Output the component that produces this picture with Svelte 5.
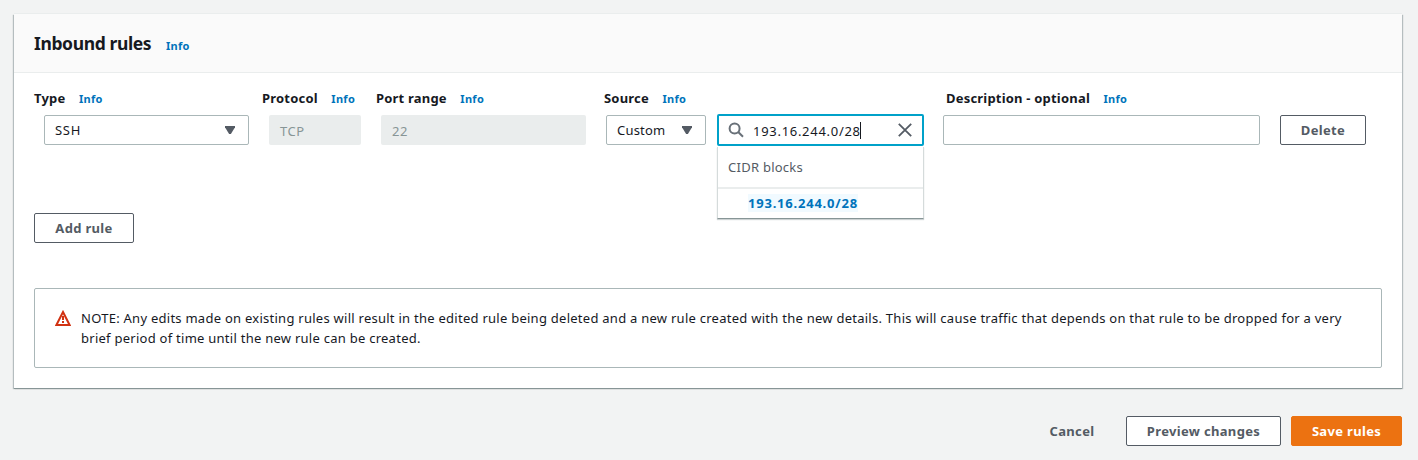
<script>
  const columns = ['Type', 'Protocol', 'Port range', 'Source', 'Description - optional'];
  let source = $state('193.16.244.0/28');
</script>

{#snippet caret()}
  <svg class="caret" width="10" height="8" viewBox="0 0 10 8"><path d="M0 0h10v1.2L5.9 8H4.1L0 1.2z" fill="#545b64" /></svg>
{/snippet}

<main>
  <section class="card">
    <header>
      <h2>Inbound rules</h2>
      <span class="info">Info</span>
    </header>
    <div class="body">
      <div class="labels">
        {#each columns as name}
          <div class="label"><span>{name}</span><span class="info">Info</span></div>
        {/each}
      </div>
      <div class="fields">
        <div class="field select type"><span>SSH</span>{@render caret()}</div>
        <div class="field disabled">TCP</div>
        <div class="field disabled">22</div>
        <div class="field select custom"><span>Custom</span>{@render caret()}</div>
        <div class="search">
          <svg width="16" height="16" viewBox="0 0 16 16" fill="none" stroke="#687078" stroke-width="2">
            <circle cx="6.6" cy="6.4" r="5" />
            <path d="M10.2 10 15 14.8" />
          </svg>
          <span class="value">{source}</span><i class="cursor"></i>
          <svg class="clear" width="14" height="14" viewBox="0 0 14 14" fill="none" stroke="#545b64" stroke-width="1.8">
            <path d="M.8 .8l12.4 12.4M13.2 .8L.8 13.2" />
          </svg>
          <div class="menu">
            <div class="group">CIDR blocks</div>
            <div class="option"><mark>{source}</mark></div>
          </div>
        </div>
        <div class="field description"></div>
        <button class="delete">Delete</button>
      </div>
      <button class="add">Add rule</button>
      <div class="note">
        <svg width="16" height="16" viewBox="0 0 16 16">
          <path d="M8 2 14.6 15H1.4z" fill="none" stroke="#d13212" stroke-width="2" />
          <path d="M8 6v4M8 11v2" stroke="#d13212" stroke-width="2" />
        </svg>
        <p>
          NOTE: Any edits made on existing rules will result in the edited rule being deleted and a new rule created with the new details. This will cause traffic that depends on that rule to be dropped for a very<br />brief period of time until the new rule can be created.
        </p>
      </div>
    </div>
  </section>
  <footer>
    <button class="cancel">Cancel</button>
    <button class="preview">Preview changes</button>
    <button class="save">Save rules</button>
  </footer>
</main>

<style>
  :global(body) { background: #f2f3f3; overflow: hidden; }
  main {
    box-sizing: border-box;
    height: 460px;
    padding: 14px 16px 0 14px;
    font: 13px/20px "Noto Sans", sans-serif;
    letter-spacing: 0.26px;
    color: #16191f;
    white-space: nowrap;
  }
  main * { box-sizing: border-box; }
  .card {
    height: 374px;
    background: #fff;
    box-shadow: 0 1px 0 #879596, 1px 1px 1px rgba(0, 28, 36, 0.25), -1px 1px 1px rgba(0, 28, 36, 0.25), 0 -1px 0 #eaeded;
  }
  header {
    height: 59px;
    padding: 17px 20px 0;
    display: flex;
    background: #fafafa;
    border-bottom: 1px solid #eaeded;
  }
  h2 { width: 132px; margin: 0; font-size: 17.5px; line-height: 24px; font-weight: 700; letter-spacing: -0.38px; }
  .info { color: #0073bb; font-size: 11px; font-weight: 700; letter-spacing: 0.3px; }
  header .info { padding-top: 5px; }
  .body { padding: 15px 20px 0; }
  .labels { display: grid; grid-template-columns: 228px 114px 228px 342px auto; }
  .label { display: flex; gap: 13.5px; font-weight: 700; letter-spacing: 0.2px; }
  .label .info { padding-top: 1px; }
  .fields {
    display: grid;
    grid-template-columns: 205px 92px 205px 100px 197px 317px 86px;
    column-gap: 20px;
    margin: 5px 0 0 10px;
    height: 32px;
    align-items: center;
  }
  .field { height: 30px; padding: 4px 10px; border: 1px solid #aab7b8; border-radius: 2px; background: #fff; }
  .disabled { padding: 6px 11px; border: 0; background: #eaeded; color: #879596; letter-spacing: 0.5px; }
  .select { display: flex; justify-content: space-between; align-items: center; padding: 0 13px 0 10px; }
  .type { letter-spacing: 0.7px; }
  .custom { letter-spacing: 0.2px; }
  .search {
    position: relative;
    display: flex;
    align-items: center;
    width: 207px;
    height: 32px;
    margin-left: -9px;
    padding: 0 10px 0 9px;
    border: 2px solid #00a1c9;
    border-radius: 2px;
    background: #fff;
  }
  .value { margin-left: 9px; letter-spacing: 0.71px; padding-top: 1px; }
  .cursor { width: 1px; height: 17px; margin-left: -1px; background: #16191f; }
  .clear { margin-left: auto; }
  .menu {
    position: absolute;
    top: 31px;
    left: -2px;
    width: 207px;
    height: 72px;
    background: #fff;
    border: 1px solid #d5dbdb;
    border-top: 0;
    border-bottom: 1px solid #879596;
    box-shadow: 0 1px 1px rgba(0, 28, 36, 0.2);
  }
  .group { height: 42px; padding: 10px 10px 0; border-bottom: 2px solid #eaeded; color: #545b64; }
  .option { padding: 4px 0 0 30px; }
  mark { background: #f1faff; color: #0073bb; font-weight: 700; letter-spacing: 0.78px; }
  button {
    height: 30px;
    padding: 0;
    border: 1px solid #545b64;
    border-radius: 2px;
    background: #fff;
    color: #545b64;
    font: 700 13px/20px "Noto Sans", sans-serif;
    letter-spacing: 0.33px;
  }
  .add { display: block; width: 100px; margin-top: 67px; }
  .note {
    display: flex;
    gap: 10px;
    height: 80px;
    margin-top: 45px;
    padding: 19px 20px;
    border: 1px solid #aab7b8;
    border-radius: 2px;
  }
  .note svg { margin-top: 2px; }
  p { margin: 0; }
  footer { display: flex; justify-content: flex-end; gap: 10px; margin-top: 28px; }
  .cancel { width: 88px; border-color: transparent; background: transparent; }
  .preview { width: 155px; }
  .save { width: 111px; border-color: #ec7211; background: #ec7211; color: #fff; }
</style>
